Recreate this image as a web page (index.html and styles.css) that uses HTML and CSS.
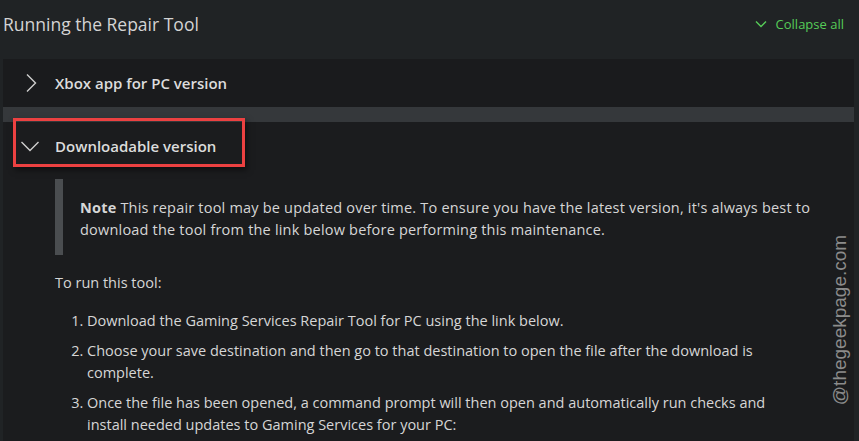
FILE: index.html
```html
<!DOCTYPE html>
<html lang="en">
<head>
<meta charset="utf-8">
<title>Running the Repair Tool</title>
<link rel="stylesheet" href="styles.css">
</head>
<body>
<div class="page">
  <header class="top">
    <h2 class="title">Running the Repair Tool</h2>
    <button class="collapse">
      <svg class="collapse-icon" width="12" height="8" viewBox="0 0 12 8"><path d="M1 1.5 L6 6.5 L11 1.5" fill="none" stroke="currentColor" stroke-width="1.4"/></svg>
      <span>Collapse all</span>
    </button>
  </header>

  <section class="panel">
    <div class="row row-closed">
      <svg class="chev" width="12" height="20" viewBox="0 0 12 20"><path d="M2 1.5 L10.5 10 L2 18.5" fill="none" stroke="currentColor" stroke-width="1.4"/></svg>
      <span class="row-label">Xbox app for PC version</span>
    </div>
    <div class="band"></div>
    <div class="row row-open">
      <svg class="chev-down" width="20" height="12" viewBox="0 0 20 12"><path d="M1.5 2 L10 10.5 L18.5 2" fill="none" stroke="currentColor" stroke-width="1.4"/></svg>
      <span class="row-label">Downloadable version</span>
      <div class="highlight"></div>
    </div>
    <div class="content">
      <blockquote class="note">
        <p><strong>Note</strong> This repair tool may be updated over time. To ensure you have the latest version, it's always best to download the tool from the link below before performing this maintenance.</p>
      </blockquote>
      <p class="intro">To run this tool:</p>
      <ol class="steps">
        <li>Download the Gaming Services Repair Tool for PC using the link below.</li>
        <li>Choose your save destination and then go to that destination to open the file after the download is complete.</li>
        <li>Once the file has been opened, a command prompt will then open and automatically run checks and install needed updates to Gaming Services for your PC:</li>
      </ol>
    </div>
  </section>
  <div class="watermark">@thegeekpage.com</div>
</div>
</body>
</html>
```

FILE: styles.css
```css
* { box-sizing: border-box; }
html, body { margin: 0; padding: 0; }
body {
  background: #202325;
  font-family: "Open Sans", "Noto Sans", sans-serif;
  color: #d6d6d6;
  width: 859px;
  height: 441px;
  overflow: hidden;
}
.page { position: relative; height: 441px; }

.top {
  display: flex;
  align-items: center;
  justify-content: space-between;
  height: 59px;
  padding: 0 15px 12px 3px;
}
.title {
  margin: 0;
  font-size: 17.5px;
  font-weight: 400;
  color: #d4d4d4;
}
.collapse {
  display: flex;
  align-items: center;
  gap: 9px;
  background: none;
  border: 0;
  padding: 0;
  color: #56cc58;
  font-family: inherit;
  font-size: 13px;
}
.collapse-icon { display: block; }

.panel {
  margin-left: 3px;
  width: 851px;
  background: #1b1c1e;
  height: 382px;
}
.row {
  position: relative;
  display: flex;
  align-items: center;
  height: 48px;
  color: #dcdcdc;
}
.row-closed { background: #1a1b1d; }
.row-closed .chev { margin-left: 22px; margin-right: 18px; color: #cfcfcf; }
.row-open .chev-down { margin-left: 17px; margin-right: 15px; color: #cfcfcf; }
.row-label { font-size: 15px; font-weight: 600; }
.band { height: 15px; background: #35383b; }

.highlight {
  position: absolute;
  left: 10px;
  top: -4px;
  width: 232px;
  height: 49px;
  border: 3px solid #ec4141;
  box-shadow: 2px 3px 6px rgba(0,0,0,0.5);
}

.content { padding: 9px 30px 0 52px; font-size: 14.5px; line-height: 22px; }
.note {
  margin: 0;
  border-left: 8px solid #4a4d50;
  padding: 18px 0 14px 17px;
  height: 76px;
  letter-spacing: 0.2px;
}
.note p { margin: 0; }
.note strong { font-weight: 700; }
.intro { margin: 17px 0 0; }
.steps { margin: 16px 0 0; padding-left: 32px; padding-right: 30px; }
.steps li { margin-bottom: 8px; }

.watermark {
  position: absolute;
  left: 840px;
  top: 320px;
  transform: translate(-50%, -50%) rotate(-90deg);
  font-family: "Liberation Sans", Arial, sans-serif;
  font-size: 19px;
  color: #8c8c8c;
  white-space: nowrap;
}
```
